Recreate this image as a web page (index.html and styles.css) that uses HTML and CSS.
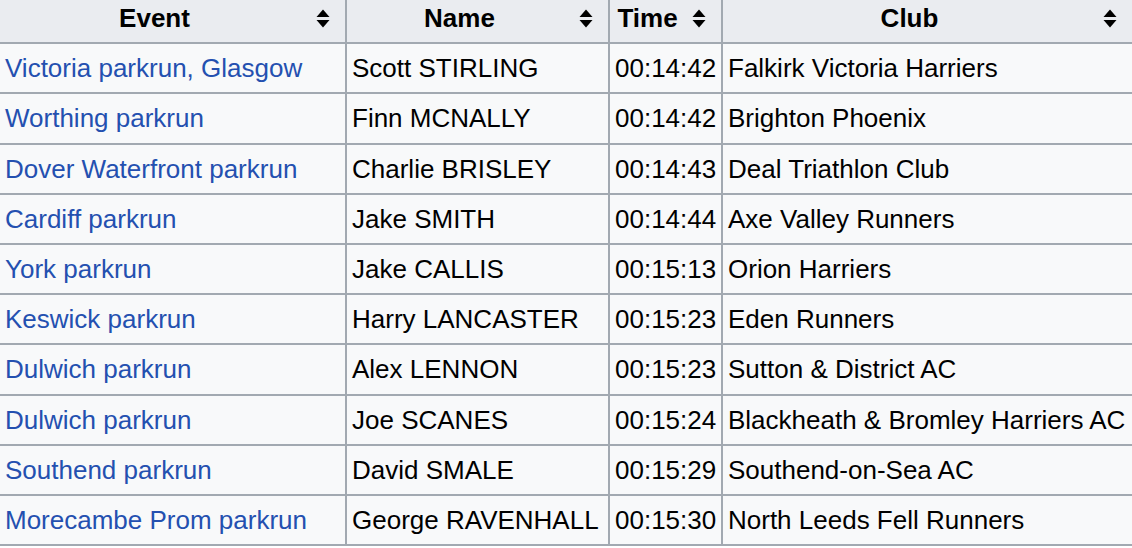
FILE: index.html
```html
<!DOCTYPE html>
<html lang="en">
<head>
<meta charset="utf-8">
<title>Fastest parkrun times</title>
<link rel="stylesheet" href="styles.css">
</head>
<body>
<table class="results">
  <colgroup>
    <col class="c-event">
    <col class="c-name">
    <col class="c-time">
    <col class="c-club">
  </colgroup>
  <thead>
    <tr>
      <th><div class="hd"><span class="lbl">Event</span><svg class="sort" viewBox="0 0 14 19"><polygon points="7,0.5 13.5,8 0.5,8"/><polygon points="0.5,11 13.5,11 7,18.5"/></svg></div></th>
      <th><div class="hd"><span class="lbl">Name</span><svg class="sort" viewBox="0 0 14 19"><polygon points="7,0.5 13.5,8 0.5,8"/><polygon points="0.5,11 13.5,11 7,18.5"/></svg></div></th>
      <th><div class="hd"><span class="lbl">Time</span><svg class="sort" viewBox="0 0 14 19"><polygon points="7,0.5 13.5,8 0.5,8"/><polygon points="0.5,11 13.5,11 7,18.5"/></svg></div></th>
      <th><div class="hd"><span class="lbl">Club</span><svg class="sort" viewBox="0 0 14 19"><polygon points="7,0.5 13.5,8 0.5,8"/><polygon points="0.5,11 13.5,11 7,18.5"/></svg></div></th>
    </tr>
  </thead>
  <tbody>
    <tr><td><a href="#">Victoria parkrun, Glasgow</a></td><td>Scott STIRLING</td><td>00:14:42</td><td>Falkirk Victoria Harriers</td></tr>
    <tr><td><a href="#">Worthing parkrun</a></td><td>Finn MCNALLY</td><td>00:14:42</td><td>Brighton Phoenix</td></tr>
    <tr><td><a href="#">Dover Waterfront parkrun</a></td><td>Charlie BRISLEY</td><td>00:14:43</td><td>Deal Triathlon Club</td></tr>
    <tr><td><a href="#">Cardiff parkrun</a></td><td>Jake SMITH</td><td>00:14:44</td><td>Axe Valley Runners</td></tr>
    <tr><td><a href="#">York parkrun</a></td><td>Jake CALLIS</td><td>00:15:13</td><td>Orion Harriers</td></tr>
    <tr><td><a href="#">Keswick parkrun</a></td><td>Harry LANCASTER</td><td>00:15:23</td><td>Eden Runners</td></tr>
    <tr><td><a href="#">Dulwich parkrun</a></td><td>Alex LENNON</td><td>00:15:23</td><td>Sutton &amp; District AC</td></tr>
    <tr><td><a href="#">Dulwich parkrun</a></td><td>Joe SCANES</td><td>00:15:24</td><td>Blackheath &amp; Bromley Harriers AC</td></tr>
    <tr><td><a href="#">Southend parkrun</a></td><td>David SMALE</td><td>00:15:29</td><td>Southend-on-Sea AC</td></tr>
    <tr><td><a href="#">Morecambe Prom parkrun</a></td><td>George RAVENHALL</td><td>00:15:30</td><td>North Leeds Fell Runners</td></tr>
  </tbody>
</table>
</body>
</html>
```

FILE: styles.css
```css
html, body {
  margin: 0;
  padding: 0;
  background: #ffffff;
}

body {
  font-family: "Liberation Sans", Arial, sans-serif;
  font-size: 26px;
  color: #202122;
}

.results {
  table-layout: fixed;
  border-collapse: separate;
  border-spacing: 0;
  width: 1136px;
  margin: -8px 0 0 -2px;
  border-left: 2px solid #a2a9b1;
  border-top: 2px solid #a2a9b1;
  background: #f8f9fa;
}

.c-event { width: 347px; }
.c-name { width: 263px; }
.c-time { width: 113px; }
.c-club { width: 411px; }

.results th,
.results td {
  box-sizing: border-box;
  border-right: 2px solid #a2a9b1;
  border-bottom: 2px solid #a2a9b1;
  padding: 9px 5px;
  line-height: 30.2px;
  white-space: nowrap;
  overflow: hidden;
  text-align: left;
  font-weight: normal;
}

.results th {
  background: #eaecf0;
  font-weight: bold;
  color: #000;
}

.hd {
  display: flex;
  align-items: center;
}

.lbl {
  flex: 1;
  text-align: center;
}

.sort {
  width: 14px;
  height: 19px;
  margin-left: 12px;
  margin-right: 10px;
  fill: #000;
  flex: none;
}

.results td {
  color: #000;
}

.results a {
  color: #2450b0;
  text-decoration: none;
}
```
